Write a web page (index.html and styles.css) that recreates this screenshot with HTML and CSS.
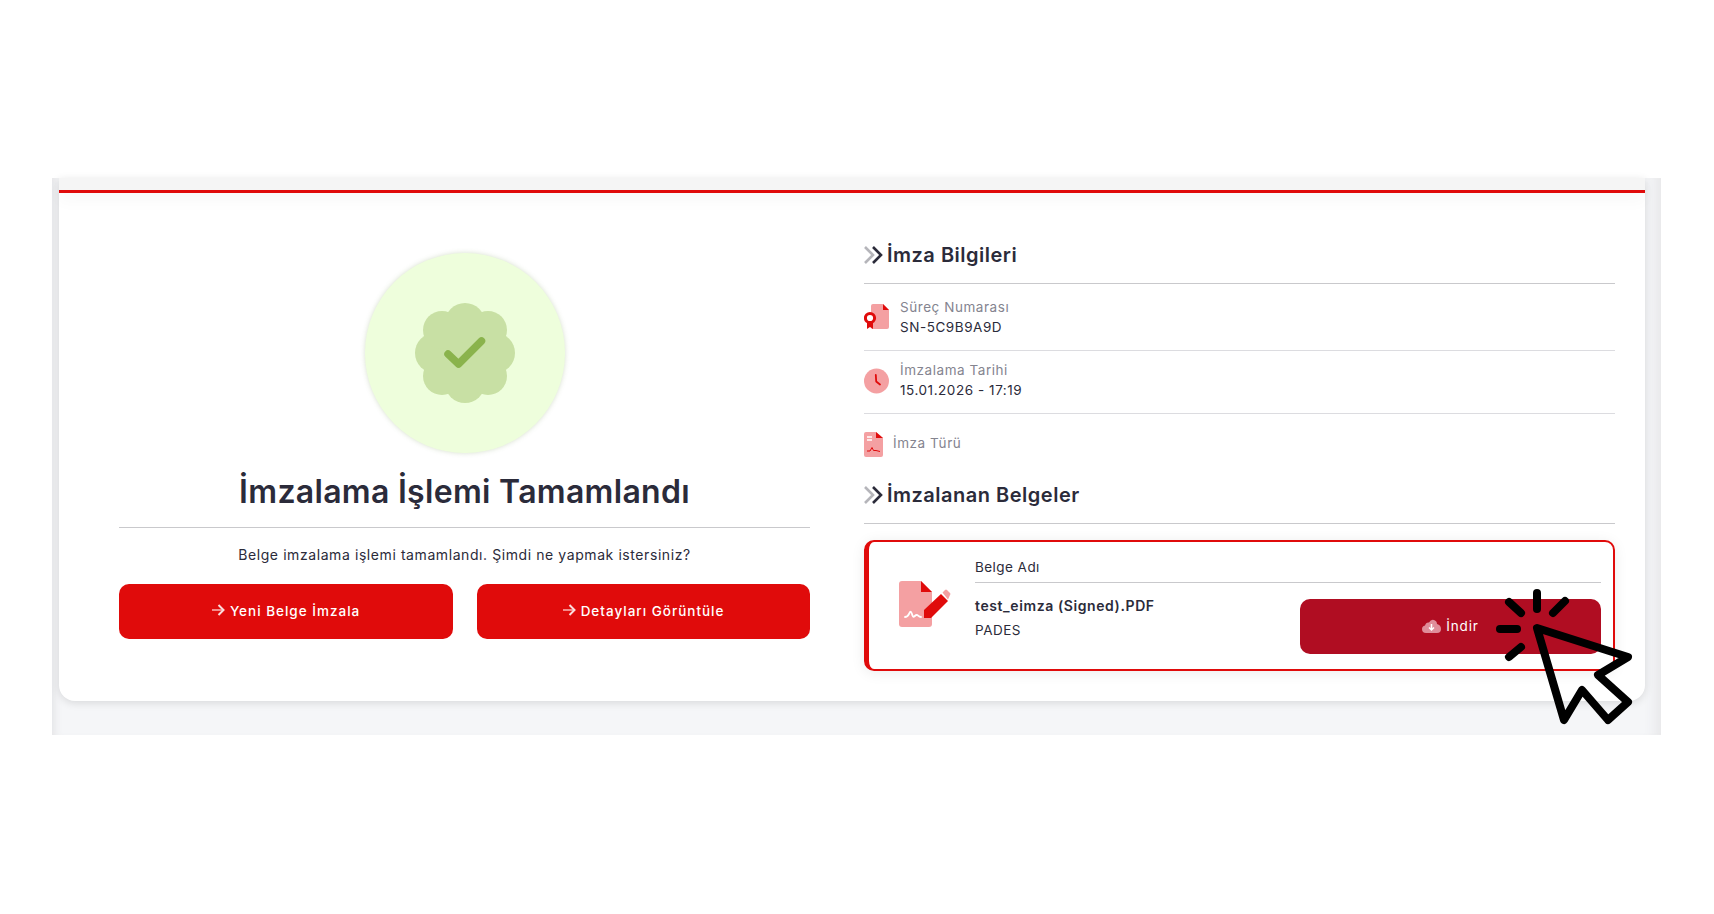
FILE: index.html
```html
<!DOCTYPE html>
<html lang="tr">
<head>
  <meta charset="utf-8" />
  <title>İmzalama İşlemi Tamamlandı</title>
  <link rel="stylesheet" href="styles.css">
</head>
<body>
  <div class="frame">
    <div class="card">
      <div class="card-top"></div>
      <div class="columns">
        <section class="done">
          <div class="done-circle">
            <svg width="100" height="100" viewBox="0 0 100 100">
              <g fill="#c8e0a4">
                <circle cx="50" cy="50" r="36" />
                <circle cx="50" cy="20" r="20" />
                <circle cx="50" cy="80" r="20" />
                <circle cx="20" cy="50" r="20" />
                <circle cx="80" cy="50" r="20" />
                <circle cx="27" cy="27" r="19" />
                <circle cx="73" cy="27" r="19" />
                <circle cx="27" cy="73" r="19" />
                <circle cx="73" cy="73" r="19" />
              </g>
              <path d="M33 51 L43.500 61 L66.500 38" fill="none" stroke="#8ab34c" stroke-width="7.500" stroke-linecap="round" stroke-linejoin="round" />
            </svg>
          </div>
          <h1>İmzalama İşlemi Tamamlandı</h1>
          <p class="done-text">Belge imzalama işlemi tamamlandı. Şimdi ne yapmak istersiniz?</p>
          <div class="done-buttons">
            <button type="button" class="btn">
              <svg width="14" height="12" viewBox="0 0 14 12"><path d="M1 6 H12.500" fill="none" stroke="#f58a8a" stroke-width="2" /><path d="M7.500 1 L12.500 6 L7.500 11" fill="none" stroke="#fbdcdc" stroke-width="2" /></svg>
              Yeni Belge İmzala
            </button>
            <button type="button" class="btn">
              <svg width="14" height="12" viewBox="0 0 14 12"><path d="M1 6 H12.500" fill="none" stroke="#f58a8a" stroke-width="2" /><path d="M7.500 1 L12.500 6 L7.500 11" fill="none" stroke="#fbdcdc" stroke-width="2" /></svg>
              Detayları Görüntüle
            </button>
          </div>
        </section>

        <section class="info">
          <h2 class="section-title">
            <svg width="19" height="18" viewBox="0 0 19 18"><path d="M1 1 L9 9 L1 17" fill="none" stroke="#b5b5ba" stroke-width="2.600" /><path d="M9 1 L17 9 L9 17" fill="none" stroke="#2b2b3a" stroke-width="2.600" /></svg>
            İmza Bilgileri
          </h2>
          <div class="info-row info-row-first">
            <svg width="25" height="26" viewBox="0 0 25 26">
              <path d="M7 2 Q7 0 9 0 H19 L25 6 V23 Q25 25 23 25 H9 Q7 25 7 23 Z" fill="#f4a0a2" />
              <path d="M19 0 L25 6 H19 Z" fill="#e00b0b" />
              <path d="M3 18 V25 L6 23 L9 25 V18 Z" fill="#e00b0b" />
              <circle cx="6" cy="14" r="4.600" fill="#fff" stroke="#e00b0b" stroke-width="3" />
            </svg>
            <div>
              <div class="row-label">Süreç Numarası</div>
              <div class="row-value">SN-5C9B9A9D</div>
            </div>
          </div>
          <div class="info-row">
            <svg class="icon-clock" width="25" height="26" viewBox="0 0 25 26">
              <circle cx="12.500" cy="13" r="12.500" fill="#f4a0a2" />
              <path d="M11.800 7 L12.200 13.500 L16 16.500" fill="none" stroke="#e00b0b" stroke-width="1.800" stroke-linecap="round" stroke-linejoin="round" />
            </svg>
            <div>
              <div class="row-label">İmzalama Tarihi</div>
              <div class="row-value">15.01.2026 - 17:19</div>
            </div>
          </div>
          <div class="info-row info-row-last">
            <svg width="19" height="25" viewBox="0 0 19 25">
              <path d="M0 2 Q0 0 2 0 H12 L19 6 V23 Q19 25 17 25 H2 Q0 25 0 23 Z" fill="#f4a0a2" />
              <path d="M12 0 L19 6 H12 Z" fill="#e00b0b" />
              <path d="M3 5 H8 M3 8 H8" stroke="#fff" stroke-width="1.300" />
              <path d="M3 19 H6 L8 15.500 L9.500 18.500 H12 L16 19.500" fill="none" stroke="#e00b0b" stroke-width="1" />
            </svg>
            <div class="row-label">İmza Türü</div>
          </div>

          <h2 class="section-title">
            <svg width="19" height="18" viewBox="0 0 19 18"><path d="M1 1 L9 9 L1 17" fill="none" stroke="#b5b5ba" stroke-width="2.600" /><path d="M9 1 L17 9 L9 17" fill="none" stroke="#2b2b3a" stroke-width="2.600" /></svg>
            İmzalanan Belgeler
          </h2>
          <div class="doc">
            <svg class="doc-icon" width="52" height="46" viewBox="0 0 52 46">
              <path d="M0 3 Q0 0 3 0 H22 L33 11 V43 Q33 46 30 46 H3 Q0 46 0 43 Z" fill="#f4a0a2" />
              <path d="M22 0 L33 11 H22 Z" fill="#e00b0b" />
              <path d="M6 36 C8 36 9 35 10 33 C11 30 12 30 13 33 C14 37 15 36 17 34 C19 33 19 36 22 36" fill="none" stroke="#fff" stroke-width="1.800" stroke-linecap="round" />
              <path d="M25 37 V29 L42 13 L49 20 L32 37 Z" fill="#e00b0b" />
              <path d="M43.500 11.500 L46 9 Q47 8 48 9 L51 12 Q52 13 51 14 L49 18.500 Z" fill="#f4a0a2" />
            </svg>
            <div class="doc-body">
              <div class="doc-head">Belge Adı</div>
              <div class="doc-main">
                <div>
                  <div class="doc-name">test_eimza (Signed).PDF</div>
                  <div class="doc-type">PADES</div>
                </div>
                <button type="button" class="btn-download">
                  <svg width="19" height="14" viewBox="0 0 19 14">
                    <path d="M4 14 Q0 14 0 10 Q0 7 3 6.500 Q4 3 7 3.500 Q9 0 12 1 Q15 2 15 5 Q19 6 19 10 Q19 14 15 14 Z" fill="#df8d9a" />
                    <path d="M9.500 5 V11 M7 8.500 L9.500 11 L12 8.500" fill="none" stroke="#fff" stroke-width="1.500" />
                  </svg>
                  İndir
                </button>
              </div>
            </div>
          </div>
        </section>
      </div>
    </div>
    <svg class="cursor" width="150" height="150" viewBox="0 0 150 150">
      <g fill="none" stroke="#000" stroke-width="8" stroke-linecap="round" stroke-linejoin="round">
        <path d="M47 8 V24" />
        <path d="M19 17 L31 28" />
        <path d="M75 16 L63 28" />
        <path d="M10 44 H27" />
        <path d="M19 72 L31 62" />
        <path d="M47 43 L138 72 L108 90 L138 117 L118 135 L92 105 L74 135 Z" />
      </g>
    </svg>
  </div>
</body>
</html>
```

FILE: styles.css
```css
body {
  margin: 0;
  padding-top: 178px;
  background-color: #fff;
  font-family: Inter, "Noto Sans", sans-serif;
  color: #2b2b3a;
}
.frame {
  position: relative;
  margin-left: 52px;
  width: 1609px;
  height: 557px;
  box-sizing: border-box;
  padding: 0 16px 34px 7px;
  background-color: #f5f6f8;
  box-shadow: inset 8px 0 8px -6px #e2e2e4, inset -16px 0 12px -10px #e8e8ea;
}
.card {
  height: 100%;
  background-color: #fff;
  border-radius: 0 0 16px 16px;
  box-shadow: 0 2px 8px rgba(0, 0, 0, 0.12);
}
.card-top {
  height: 12px;
  background-color: #f5f5f5;
  border-bottom: 3px solid #e00b0b;
  box-shadow: 0 8px 16px rgba(0, 0, 0, 0.03);
}
.columns {
  display: flex;
  gap: 54px;
  padding: 0 30px 0 60px;
}
.done {
  width: 691px;
  padding-top: 60px;
}
.done-circle {
  display: flex;
  align-items: center;
  justify-content: center;
  width: 200px;
  height: 200px;
  margin: 0 auto;
  border-radius: 50%;
  background-color: #eefedc;
  box-shadow: 0 0 5px rgba(120, 150, 90, 0.3);
}
h1 {
  margin: 20px 0 0;
  padding-bottom: 16px;
  border-bottom: 1px solid #c9c9cc;
  font-size: 32px;
  line-height: 38px;
  font-weight: 600;
  letter-spacing: 0.3px;
  text-align: center;
}
.done-text {
  margin: 18px 0 0;
  font-size: 14px;
  line-height: 17px;
  letter-spacing: 0.58px;
  text-align: center;
}
.done-buttons {
  display: flex;
  gap: 24px;
  margin-top: 21px;
}
.btn {
  flex: 1;
  height: 55px;
  padding-bottom: 3px;
  border: none;
  border-radius: 10px;
  background-color: #e00b0b;
  color: #fff;
  font-family: inherit;
  font-size: 13.500px;
  font-weight: 500;
  letter-spacing: 1px;
}
.info {
  width: 751px;
  padding-top: 50px;
}
.section-title {
  display: flex;
  align-items: center;
  gap: 4px;
  margin: 0;
  padding-bottom: 16px;
  border-bottom: 1px solid #c9c9cc;
  font-size: 20px;
  line-height: 24px;
  font-weight: 600;
  letter-spacing: 0.5px;
}
.info-row {
  display: flex;
  align-items: center;
  gap: 11px;
  padding: 9px 0 13px;
  border-bottom: 1px solid #dcdce0;
}
.info-row-first {
  padding-top: 13px;
}
.info-row-last {
  align-items: flex-start;
  gap: 10px;
  padding: 18px 0 0;
  margin-bottom: 26px;
  border-bottom: none;
}
.info-row-last .row-label {
  line-height: 22px;
}
.icon-clock {
  margin-top: 2px;
}
.row-label {
  font-size: 13.500px;
  line-height: 20px;
  letter-spacing: 0.55px;
  color: #84848f;
}
.row-value {
  font-size: 13.500px;
  line-height: 20px;
  letter-spacing: 0.55px;
}
.doc {
  display: flex;
  box-sizing: border-box;
  height: 131px;
  margin-top: 16px;
  padding: 7px 12px 0 30px;
  border: 2px solid #e00b0b;
  border-left-width: 5px;
  border-radius: 10px;
  box-shadow: 0 2px 14px rgba(0, 0, 0, 0.08);
}
.doc-icon {
  flex-shrink: 0;
  margin: 32px 24px 0 0;
}
.doc-body {
  flex: 1;
}
.doc-head {
  height: 33px;
  border-bottom: 1px solid #c9c9cc;
  font-size: 13.500px;
  line-height: 36px;
  letter-spacing: 0.45px;
}
.doc-main {
  display: flex;
  align-items: flex-start;
  justify-content: space-between;
  padding-top: 14px;
}
.doc-name {
  font-size: 14px;
  font-weight: 600;
  line-height: 17px;
  letter-spacing: 0.6px;
}
.doc-type {
  margin-top: 8px;
  font-size: 13.500px;
  line-height: 17px;
  letter-spacing: 0.5px;
}
.btn-download {
  display: flex;
  align-items: center;
  justify-content: center;
  gap: 5px;
  width: 301px;
  height: 55px;
  margin-top: 2px;
  padding-bottom: 3px;
  border: none;
  border-radius: 10px;
  background-color: #b00d22;
  color: #fff;
  font-family: inherit;
  font-size: 13.500px;
  letter-spacing: 0.9px;
}
.cursor {
  position: absolute;
  left: 1438px;
  top: 407px;
}
```
